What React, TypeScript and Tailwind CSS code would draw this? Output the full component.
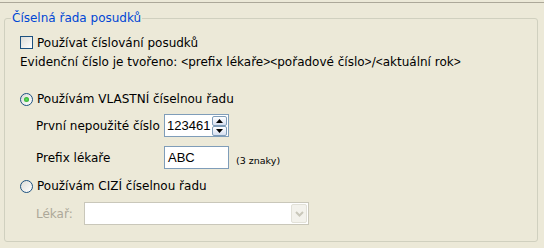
import React from "react";

function CheckBox() {
  return <span className="w-[13px] h-[13px] shrink-0 border border-[#1c5180] bg-linear-to-br from-[#dcdcd7] to-white" />;
}

function Radio({ checked }: { checked?: boolean }) {
  return (
    <span className="w-[13px] h-[13px] shrink-0 rounded-full border border-[#1c5180] bg-linear-to-br from-[#dcdcd7] to-white flex items-center justify-center">
      {checked && <span className="w-[5px] h-[5px] rounded-full bg-radial from-[#5ee35e] to-[#1c9a1c]" />}
    </span>
  );
}

function SpinArrow({ up }: { up?: boolean }) {
  return (
    <span className="w-[15px] h-[10px] border border-[#7f9db9] rounded-[2px] bg-linear-to-b from-white to-[#d6dff0] flex items-center justify-center">
      <svg width="7" height="4" viewBox="0 0 7 4">
        {up ? <path d="M0 4h7L3.5 0z" fill="#000" /> : <path d="M0 0h7L3.5 4z" fill="#000" />}
      </svg>
    </span>
  );
}

// Tahoma-like narrow angle brackets
function B({ children }: { children: React.ReactNode }) {
  return <span className="font-['Liberation_Sans',sans-serif]">{children}</span>;
}

export default function App() {
  return (
    <div className="w-[544px] h-[248px] bg-[#ece9d8] overflow-hidden font-['DejaVu_Sans',sans-serif] text-[12px] text-black">
      <div className="h-[2px]" />
      <div className="border-t border-[#aca899]" />

      {/* Group box */}
      <fieldset className="mt-[8px] ml-[4px] w-[534px] border border-[#d0d0bf] rounded-[3px] pb-[16px]">
        <legend className="ml-[6px] px-[1px] leading-[14px] text-[#0046d5]">Číselná řada posudků</legend>

        <div className="pl-[15px] pt-[9px] flex flex-col">
          <div className="h-[17px] flex items-center gap-[4px]">
            <CheckBox />
            <span>Používat číslování posudků</span>
          </div>

          <div className="mt-[3px] h-[16px] flex items-center whitespace-pre">
            Evidenční číslo je tvořeno: <B>&lt;</B>prefix lékaře<B>&gt;&lt;</B>pořadové číslo<B>&gt;</B>/<B>&lt;</B>aktuální rok<B>&gt;</B>
          </div>

          <div className="mt-[20px] h-[18px] flex items-center gap-[4px]">
            <Radio checked />
            <span>Používám VLASTNÍ číselnou řadu</span>
          </div>

          <div className="mt-[6px] ml-[16px] h-[23px] flex items-center">
            <span className="w-[128px]">První nepoužité číslo</span>
            <div className="w-[65px] h-[23px] bg-white border border-[#7f9db9] flex items-center pl-[2px] pr-[1px]">
              <span className="flex-1 font-['Liberation_Sans',sans-serif] text-[13px]">123461</span>
              <div className="flex flex-col">
                <SpinArrow up />
                <SpinArrow />
              </div>
            </div>
          </div>

          <div className="mt-[9px] ml-[16px] h-[23px] flex items-center">
            <span className="w-[128px]">Prefix lékaře</span>
            <div className="w-[65px] h-[23px] bg-white border border-[#7f9db9] flex items-center pl-[3px] font-['Liberation_Sans',sans-serif] text-[13px]">
              ABC
            </div>
            <span className="ml-[7px] mt-[8px] text-[9.5px]">(3 znaky)</span>
          </div>

          <div className="mt-[8px] h-[18px] flex items-center gap-[4px]">
            <Radio />
            <span>Používám CIZÍ číselnou řadu</span>
          </div>

          <div className="mt-[7px] ml-[16px] h-[23px] flex items-center">
            <span className="w-[48px] text-[#aca899]">Lékař:</span>
            <div className="w-[225px] h-[23px] bg-white border border-[#c9c7ba] flex items-center justify-end pr-[1px]">
              <span className="w-[16px] h-[19px] bg-[#f3f2ec] border border-[#e2e1d8] rounded-[2px] flex items-center justify-center">
                <svg width="9" height="6" viewBox="0 0 9 6">
                  <path d="M1 1l3.5 3.5L8 1" stroke="#c9c7ba" strokeWidth="2" fill="none" />
                </svg>
              </span>
            </div>
          </div>
        </div>
      </fieldset>
    </div>
  );
}
